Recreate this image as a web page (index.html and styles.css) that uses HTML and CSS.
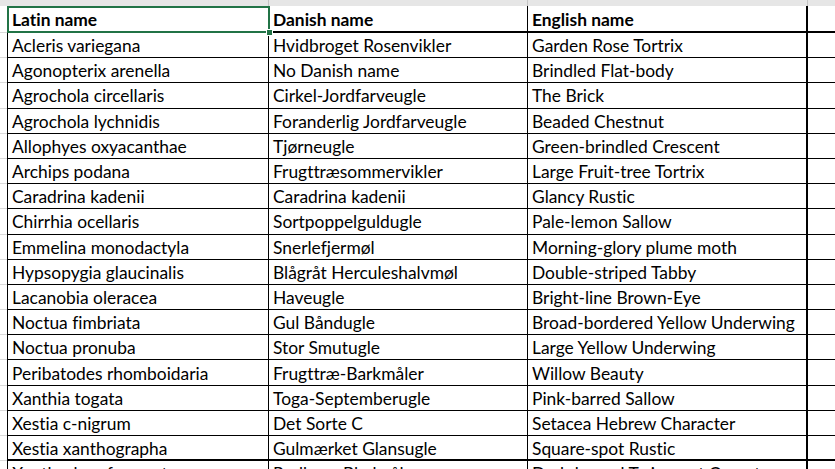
FILE: index.html
```html
<!DOCTYPE html>
<html>
<head>
<meta charset="utf-8">
<link rel="stylesheet" href="styles.css">
</head>
<body>
<div class="sheet">
  <div class="band gut"></div><div class="band"></div><div class="band"></div><div class="band"></div><div class="band last"></div>

  <div class="g"></div><div class="c a hd sel">Latin name<span class="handle"></span></div><div class="c hd">Danish name</div><div class="c hd cc">English name</div><div class="c d hd"></div>

  <div class="g"></div><div class="c a">Acleris variegana</div><div class="c">Hvidbroget Rosenvikler</div><div class="c cc">Garden Rose Tortrix</div><div class="c d"></div>
  <div class="g"></div><div class="c a">Agonopterix arenella</div><div class="c">No Danish name</div><div class="c cc">Brindled Flat-body</div><div class="c d"></div>
  <div class="g"></div><div class="c a">Agrochola circellaris</div><div class="c">Cirkel-Jordfarveugle</div><div class="c cc">The Brick</div><div class="c d"></div>
  <div class="g"></div><div class="c a">Agrochola lychnidis</div><div class="c">Foranderlig Jordfarveugle</div><div class="c cc">Beaded Chestnut</div><div class="c d"></div>
  <div class="g"></div><div class="c a">Allophyes oxyacanthae</div><div class="c">Tjørneugle</div><div class="c cc">Green-brindled Crescent</div><div class="c d"></div>
  <div class="g"></div><div class="c a">Archips podana</div><div class="c">Frugttræsommervikler</div><div class="c cc">Large Fruit-tree Tortrix</div><div class="c d"></div>
  <div class="g"></div><div class="c a">Caradrina kadenii</div><div class="c">Caradrina kadenii</div><div class="c cc">Glancy Rustic</div><div class="c d"></div>
  <div class="g"></div><div class="c a">Chirrhia ocellaris</div><div class="c">Sortpoppelguldugle</div><div class="c cc">Pale-lemon Sallow</div><div class="c d"></div>
  <div class="g"></div><div class="c a">Emmelina monodactyla</div><div class="c">Snerlefjermøl</div><div class="c cc">Morning-glory plume moth</div><div class="c d"></div>
  <div class="g"></div><div class="c a">Hypsopygia glaucinalis</div><div class="c">Blågråt Herculeshalvmøl</div><div class="c cc">Double-striped Tabby</div><div class="c d"></div>
  <div class="g"></div><div class="c a">Lacanobia oleracea</div><div class="c">Haveugle</div><div class="c cc">Bright-line Brown-Eye</div><div class="c d"></div>
  <div class="g"></div><div class="c a">Noctua fimbriata</div><div class="c">Gul Båndugle</div><div class="c cc">Broad-bordered Yellow Underwing</div><div class="c d"></div>
  <div class="g"></div><div class="c a">Noctua pronuba</div><div class="c">Stor Smutugle</div><div class="c cc">Large Yellow Underwing</div><div class="c d"></div>
  <div class="g"></div><div class="c a">Peribatodes rhomboidaria</div><div class="c">Frugttræ-Barkmåler</div><div class="c cc">Willow Beauty</div><div class="c d"></div>
  <div class="g"></div><div class="c a">Xanthia togata</div><div class="c">Toga-Septemberugle</div><div class="c cc">Pink-barred Sallow</div><div class="c d"></div>
  <div class="g"></div><div class="c a">Xestia c-nigrum</div><div class="c">Det Sorte C</div><div class="c cc">Setacea Hebrew Character</div><div class="c d"></div>
  <div class="g"></div><div class="c a end">Xestia xanthographa</div><div class="c end">Gulmærket Glansugle</div><div class="c cc end">Square-spot Rustic</div><div class="c d end"></div>
  <div class="g"></div><div class="c a">Xanthorhoe ferrugata</div><div class="c">Rødbrun Bladmåler</div><div class="c cc">Dark-barred Twin-spot Carpet</div><div class="c d"></div>
</div>
</body>
</html>
```
FILE: styles.css
```css
html, body {
  margin: 0;
  padding: 0;
  background: #ffffff;
  overflow: hidden;
}
.sheet {
  display: grid;
  grid-template-columns: 7px 262px 259px 280px 1fr;
  grid-template-rows: 6px 27px;
  grid-auto-rows: 25.2px;
  width: 835px;
  height: 469px;
  overflow: hidden;
  font-family: Lato, "Liberation Sans", sans-serif;
  font-size: 17.4px;
  font-variant-ligatures: none;
  color: #000;
}
.band {
  background: #e6e6e6;
  border-right: 1px solid #c4c4c4;
  box-sizing: border-box;
}
.band.gut { border-right: none; }
.band.last { border-right: none; }
.g {
  border-bottom: 1px solid #d9d9d9;
  box-sizing: border-box;
}
.c {
  box-sizing: border-box;
  border-right: 1px solid #000;
  border-bottom: 1px solid #000;
  padding: 0 0 0 4px;
  display: flex;
  align-items: center;
  padding-top: 1px;
  white-space: nowrap;
  overflow: hidden;
  position: relative;
}
.c.a { border-left: 1px solid #000; }
.c.cc { border-right: 2px solid #000; }
.c.d { border-right: none; }
.hd {
  font-weight: 700;
  border-bottom: 2px solid #000;
}
.end { border-bottom: 2px solid #000; }
.sel { overflow: visible; }
.sel::after {
  content: "";
  position: absolute;
  left: -1px;
  top: 0;
  right: -2px;
  bottom: -2px;
  border: 2px solid #217346;
  pointer-events: none;
}
.handle {
  position: absolute;
  right: -5px;
  bottom: -5px;
  width: 5px;
  height: 5px;
  background: #217346;
  border: 1px solid #fff;
  z-index: 2;
}
```
